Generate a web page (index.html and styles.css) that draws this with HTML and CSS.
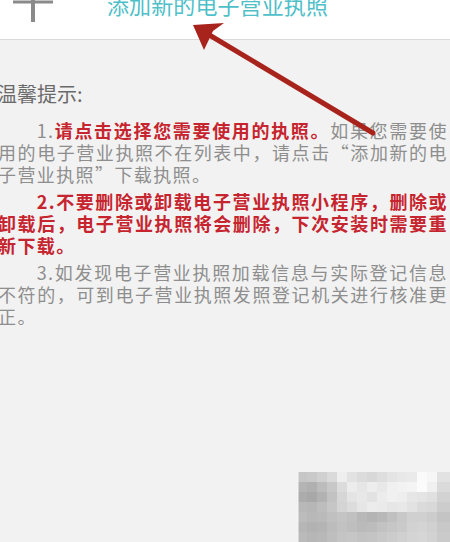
FILE: index.html
```html
<!DOCTYPE html>
<html lang="zh-CN">
<head>
<meta charset="utf-8">
<link rel="stylesheet" href="styles.css">
</head>
<body>
<div class="page">
  <header class="header">
    <svg class="plus" viewBox="0 0 40 40" width="40" height="40">
      <line x1="20" y1="0" x2="20" y2="40" stroke="#8a8a8a" stroke-width="4"/>
      <line x1="0" y1="20" x2="40" y2="20" stroke="#8a8a8a" stroke-width="3"/>
    </svg>
    <div class="title">添加新的电子营业执照</div>
  </header>
  <main class="content">
    <div class="tip-title">温馨提示:</div>
    <div class="tips">
      <p class="tip">1.<b class="red">请点击选择您需要使用的执照。</b>如果您需要使用的电子营业执照不在列表中，请点击“添加新的电子营业执照”下载执照。</p>
      <p class="tip red">2.不要删除或卸载电子营业执照小程序，删除或卸载后，电子营业执照将会删除，下次安装时需要重新下载。</p>
      <p class="tip">3.如发现电子营业执照加载信息与实际登记信息不符的，可到电子营业执照发照登记机关进行核准更正。</p>
    </div>
  </main>
  <svg class="arrow" viewBox="0 0 450 542" width="450" height="542">
    <line x1="206" y1="33" x2="373" y2="133" stroke="#a8231c" stroke-width="5" stroke-linecap="round"/>
    <polygon points="193,25 224,23 213,31 204,50" fill="#a8231c"/>
  </svg>
  <svg class="mosaic" viewBox="0 0 153 70" width="153" height="70">
    <g>
      <rect x="0" y="0" width="10" height="10" fill="#c6c6c6"/>
      <rect x="10" y="0" width="10" height="10" fill="#c9c9c9"/>
      <rect x="20" y="0" width="10" height="10" fill="#d0d0d0"/>
      <rect x="30" y="0" width="10" height="10" fill="#dadada"/>
      <rect x="40" y="0" width="10" height="10" fill="#eeeeee"/>
      <rect x="50" y="0" width="10" height="10" fill="#e2e2e2"/>
      <rect x="60" y="0" width="10" height="10" fill="#dcdcdc"/>
      <rect x="70" y="0" width="10" height="10" fill="#d8d8d8"/>
      <rect x="80" y="0" width="10" height="10" fill="#dedede"/>
      <rect x="90" y="0" width="10" height="10" fill="#e4e4e4"/>
      <rect x="100" y="0" width="10" height="10" fill="#e8e8e8"/>
      <rect x="110" y="0" width="10" height="10" fill="#eaeaea"/>
      <rect x="120" y="0" width="10" height="10" fill="#fafafa"/>
      <rect x="130" y="0" width="10" height="10" fill="#f6f6f6"/>
      <rect x="140" y="0" width="13" height="10" fill="#e2e2e2"/>

      <rect x="0" y="10" width="10" height="10" fill="#b4b4b4"/>
      <rect x="10" y="10" width="10" height="10" fill="#b0b0b0"/>
      <rect x="20" y="10" width="10" height="10" fill="#bcbcbc"/>
      <rect x="30" y="10" width="10" height="10" fill="#c8c8c8"/>
      <rect x="40" y="10" width="10" height="10" fill="#dcdcdc"/>
      <rect x="50" y="10" width="10" height="10" fill="#ececec"/>
      <rect x="60" y="10" width="10" height="10" fill="#e6e6e6"/>
      <rect x="70" y="10" width="10" height="10" fill="#ededed"/>
      <rect x="80" y="10" width="10" height="10" fill="#e8e8e8"/>
      <rect x="90" y="10" width="10" height="10" fill="#f0f0f0"/>
      <rect x="100" y="10" width="10" height="10" fill="#f2f2f2"/>
      <rect x="110" y="10" width="10" height="10" fill="#f4f4f4"/>
      <rect x="120" y="10" width="10" height="10" fill="#fbfbfb"/>
      <rect x="130" y="10" width="10" height="10" fill="#f0f0f0"/>
      <rect x="140" y="10" width="13" height="10" fill="#dadada"/>

      <rect x="0" y="20" width="10" height="10" fill="#acacac"/>
      <rect x="10" y="20" width="10" height="10" fill="#a8a8a8"/>
      <rect x="20" y="20" width="10" height="10" fill="#b2b2b2"/>
      <rect x="30" y="20" width="10" height="10" fill="#c2c2c2"/>
      <rect x="40" y="20" width="10" height="10" fill="#d6d6d6"/>
      <rect x="50" y="20" width="10" height="10" fill="#e4e4e4"/>
      <rect x="60" y="20" width="10" height="10" fill="#e8e8e8"/>
      <rect x="70" y="20" width="10" height="10" fill="#e2e2e2"/>
      <rect x="80" y="20" width="10" height="10" fill="#ececec"/>
      <rect x="90" y="20" width="10" height="10" fill="#f0f0f0"/>
      <rect x="100" y="20" width="10" height="10" fill="#eeeeee"/>
      <rect x="110" y="20" width="10" height="10" fill="#e6e6e6"/>
      <rect x="120" y="20" width="10" height="10" fill="#e4e4e4"/>
      <rect x="130" y="20" width="10" height="10" fill="#e0e0e0"/>
      <rect x="140" y="20" width="13" height="10" fill="#d2d2d2"/>

      <rect x="0" y="30" width="10" height="10" fill="#b8b8b8"/>
      <rect x="10" y="30" width="10" height="10" fill="#b6b6b6"/>
      <rect x="20" y="30" width="10" height="10" fill="#bdbdbd"/>
      <rect x="30" y="30" width="10" height="10" fill="#c6c6c6"/>
      <rect x="40" y="30" width="10" height="10" fill="#d4d4d4"/>
      <rect x="50" y="30" width="10" height="10" fill="#dcdcdc"/>
      <rect x="60" y="30" width="10" height="10" fill="#e6e6e6"/>
      <rect x="70" y="30" width="10" height="10" fill="#ececec"/>
      <rect x="80" y="30" width="10" height="10" fill="#eaeaea"/>
      <rect x="90" y="30" width="10" height="10" fill="#e6e6e6"/>
      <rect x="100" y="30" width="10" height="10" fill="#e8e8e8"/>
      <rect x="110" y="30" width="10" height="10" fill="#e2e2e2"/>
      <rect x="120" y="30" width="10" height="10" fill="#dadada"/>
      <rect x="130" y="30" width="10" height="10" fill="#d8d8d8"/>
      <rect x="140" y="30" width="13" height="10" fill="#cccccc"/>

      <rect x="0" y="40" width="10" height="10" fill="#bcbcbc"/>
      <rect x="10" y="40" width="10" height="10" fill="#b8b8b8"/>
      <rect x="20" y="40" width="10" height="10" fill="#bababa"/>
      <rect x="30" y="40" width="10" height="10" fill="#c0c0c0"/>
      <rect x="40" y="40" width="10" height="10" fill="#c4c4c4"/>
      <rect x="50" y="40" width="10" height="10" fill="#c0c0c0"/>
      <rect x="60" y="40" width="10" height="10" fill="#b8b8b8"/>
      <rect x="70" y="40" width="10" height="10" fill="#b4b4b4"/>
      <rect x="80" y="40" width="10" height="10" fill="#b8b8b8"/>
      <rect x="90" y="40" width="10" height="10" fill="#c0c0c0"/>
      <rect x="100" y="40" width="10" height="10" fill="#c8c8c8"/>
      <rect x="110" y="40" width="10" height="10" fill="#d0d0d0"/>
      <rect x="120" y="40" width="10" height="10" fill="#d0d0d0"/>
      <rect x="130" y="40" width="10" height="10" fill="#cccccc"/>
      <rect x="140" y="40" width="13" height="10" fill="#c4c4c4"/>

      <rect x="0" y="50" width="10" height="10" fill="#b6b6b6"/>
      <rect x="10" y="50" width="10" height="10" fill="#b2b2b2"/>
      <rect x="20" y="50" width="10" height="10" fill="#b4b4b4"/>
      <rect x="30" y="50" width="10" height="10" fill="#bcbcbc"/>
      <rect x="40" y="50" width="10" height="10" fill="#c2c2c2"/>
      <rect x="50" y="50" width="10" height="10" fill="#bebebe"/>
      <rect x="60" y="50" width="10" height="10" fill="#bababa"/>
      <rect x="70" y="50" width="10" height="10" fill="#bcbcbc"/>
      <rect x="80" y="50" width="10" height="10" fill="#c2c2c2"/>
      <rect x="90" y="50" width="10" height="10" fill="#c6c6c6"/>
      <rect x="100" y="50" width="10" height="10" fill="#cacaca"/>
      <rect x="110" y="50" width="10" height="10" fill="#d2d2d2"/>
      <rect x="120" y="50" width="10" height="10" fill="#d4d4d4"/>
      <rect x="130" y="50" width="10" height="10" fill="#d0d0d0"/>
      <rect x="140" y="50" width="13" height="10" fill="#c8c8c8"/>

      <rect x="0" y="60" width="10" height="10" fill="#bababa"/>
      <rect x="10" y="60" width="10" height="10" fill="#b6b6b6"/>
      <rect x="20" y="60" width="10" height="10" fill="#b8b8b8"/>
      <rect x="30" y="60" width="10" height="10" fill="#bebebe"/>
      <rect x="40" y="60" width="10" height="10" fill="#c4c4c4"/>
      <rect x="50" y="60" width="10" height="10" fill="#c6c6c6"/>
      <rect x="60" y="60" width="10" height="10" fill="#c2c2c2"/>
      <rect x="70" y="60" width="10" height="10" fill="#c4c4c4"/>
      <rect x="80" y="60" width="10" height="10" fill="#c8c8c8"/>
      <rect x="90" y="60" width="10" height="10" fill="#cccccc"/>
      <rect x="100" y="60" width="10" height="10" fill="#d0d0d0"/>
      <rect x="110" y="60" width="10" height="10" fill="#d4d4d4"/>
      <rect x="120" y="60" width="10" height="10" fill="#d6d6d6"/>
      <rect x="130" y="60" width="10" height="10" fill="#d2d2d2"/>
      <rect x="140" y="60" width="13" height="10" fill="#cacaca"/>
      <rect x="0" y="0" width="1.5" height="70" fill="#f4f4f4"/>
    </g>
  </svg>
</div>
</body>
</html>
```
FILE: styles.css
```css
* { box-sizing: border-box; }
html, body {
  margin: 0;
  padding: 0;
  background: #f2f2f2;
}
.page {
  position: relative;
  width: 450px;
  height: 542px;
  overflow: hidden;
  background: #f2f2f2;
  font-family: "Noto Sans CJK SC", "Noto Sans", sans-serif;
}
.header {
  height: 40px;
  background: #ffffff;
  border-bottom: 1px solid #dadada;
  display: flex;
  align-items: flex-start;
  overflow: hidden;
}
.plus {
  flex: none;
  margin-left: 13px;
  margin-top: -18px;
}
.title {
  margin-left: 54px;
  margin-top: -7px;
  font-size: 22px;
  line-height: 22px;
  color: #4fbfc9;
  letter-spacing: 0.1px;
}
.content {
  padding-top: 42px;
}
.tip-title {
  margin-left: -3px;
  font-size: 20px;
  line-height: 24px;
  color: #6a6a6a;
  letter-spacing: 0;
}
.tips {
  margin-top: 13px;
  margin-left: -2px;
  width: 450px;
}
.tip {
  margin: 0 0 5px 0;
  font-size: 18px;
  line-height: 22px;
  letter-spacing: 1.4px;
  text-indent: 2.15em;
  color: #8e8e8e;
  text-align: justify;
}
.red {
  color: #c6242e;
  font-weight: bold;
}
.arrow {
  position: absolute;
  left: 0;
  top: 0;
}
.mosaic {
  position: absolute;
  left: 297px;
  top: 472px;
}
```
